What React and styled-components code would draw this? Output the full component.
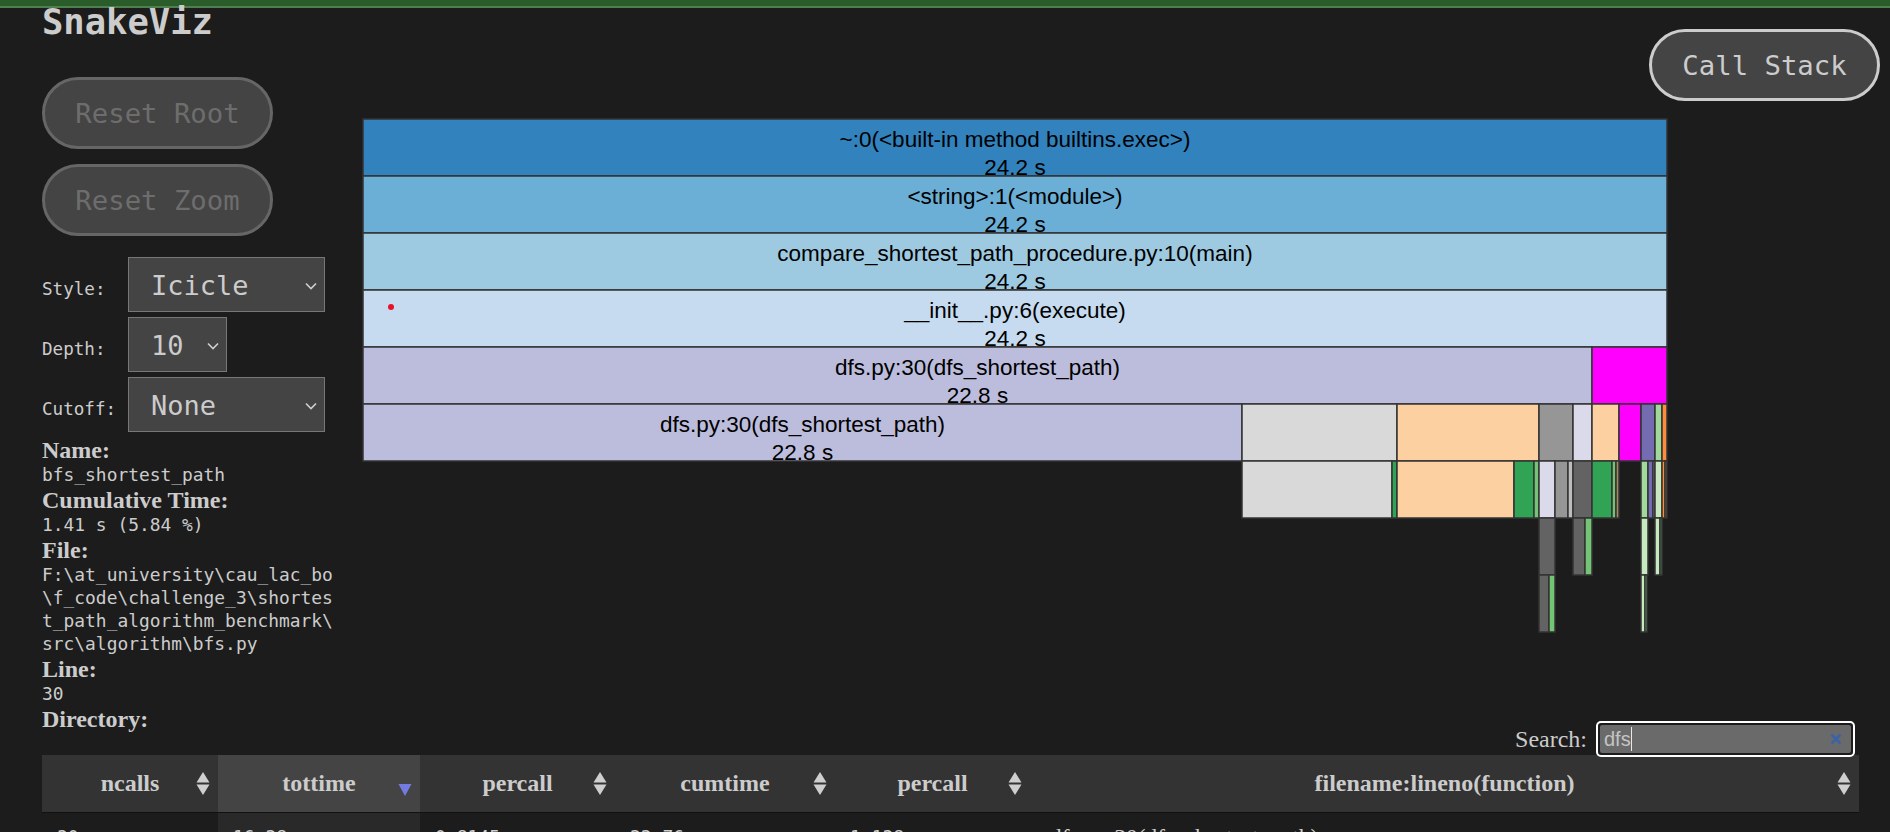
import styled, { createGlobalStyle } from "styled-components"

const MONO = '"DejaVu Sans Mono", "Liberation Mono", monospace'
const SERIF = '"Liberation Serif", "Times New Roman", serif'

const ROW = 57
const CHART_W = 1304
const CHART_X = 363

// x0, x1 in page pixels, one list per depth of the icicle
const LEVELS = [
    [[363, 1667, "#3182bd", "~:0(<built-in method builtins.exec>)", "24.2 s"]],
    [[363, 1667, "#6baed6", "<string>:1(<module>)", "24.2 s"]],
    [[363, 1667, "#9ecae1", "compare_shortest_path_procedure.py:10(main)", "24.2 s"]],
    [[363, 1667, "#c6dbef", "__init__.py:6(execute)", "24.2 s"]],
    [
        [363, 1592, "#bcbddc", "dfs.py:30(dfs_shortest_path)", "22.8 s"],
        [1592, 1667, "#ff00ff"],
    ],
    [
        [363, 1242, "#bcbddc", "dfs.py:30(dfs_shortest_path)", "22.8 s"],
        [1242, 1397, "#d9d9d9"],
        [1397, 1539, "#fdd0a2"],
        [1539, 1573, "#969696"],
        [1573, 1592, "#dadaeb"],
        [1592, 1619, "#fdd0a2"],
        [1619, 1641, "#ff00ff"],
        [1641, 1655, "#756bb1"],
        [1655, 1662, "#a1d99b"],
        [1662, 1667, "#fd8d3c"],
    ],
    [
        [1242, 1392, "#d9d9d9"],
        [1392, 1397, "#31a354"],
        [1397, 1514, "#fdd0a2"],
        [1514, 1534, "#31a354"],
        [1534, 1539, "#74c476"],
        [1539, 1555, "#dadaeb"],
        [1555, 1568, "#969696"],
        [1568, 1573, "#bdbdbd"],
        [1573, 1592, "#636363"],
        [1592, 1612, "#31a354"],
        [1612, 1616, "#74c476"],
        [1616, 1619, "#a68a64"],
        [1641, 1648, "#a1d99b"],
        [1648, 1653, "#756bb1"],
        [1653, 1655, "#9e9ac8"],
        [1655, 1662, "#c7e9c0"],
        [1662, 1665, "#fd8d3c"],
        [1665, 1667, "#8c5a30"],
    ],
    [
        [1539, 1555, "#636363"],
        [1573, 1585, "#636363"],
        [1585, 1592, "#74c476"],
        [1641, 1648, "#c7e9c0"],
        [1655, 1660, "#c7e9c0"],
        [1660, 1662, "#4f8f5a"],
    ],
    [
        [1539, 1549, "#636363"],
        [1549, 1555, "#74c476"],
        [1641, 1645, "#c7e9c0"],
        [1645, 1647, "#74c476"],
    ],
]

const COLUMNS = [
    { title: "ncalls", value: "30" },
    { title: "tottime", value: "16.28", sorted: true },
    { title: "percall", value: "0.8145" },
    { title: "cumtime", value: "22.76" },
    { title: "percall", value: "1.138" },
    { title: "filename:lineno(function)", value: "dfs.py:30(dfs_shortest_path)", wide: true },
]

const FILE_PATH = "F:\\at_university\\cau_lac_bo\n\\f_code\\challenge_3\\shortes\nt_path_algorithm_benchmark\\\nsrc\\algorithm\\bfs.py"

function Icicle() {
    return (
        <ChartSvg width={CHART_W + 2} height={ROW * LEVELS.length + 2} viewBox={`${CHART_X - 1} 118 ${CHART_W + 2} ${ROW * LEVELS.length + 2}`}>
            {LEVELS.map((level, depth) =>
                level.map(([x0, x1, fill, name, time]) => {
                    const y = 119 + depth * ROW
                    return (
                        <g key={x0}>
                            <rect x={x0} y={y} width={x1 - x0} height={ROW} fill={fill} stroke="#333" strokeWidth="1.5" />
                            {name && (
                                <ChartLabel x={(x0 + x1) / 2} y={y + 28}>
                                    {name}
                                </ChartLabel>
                            )}
                            {time && (
                                <ChartLabel x={(x0 + x1) / 2} y={y + 56}>
                                    {time}
                                </ChartLabel>
                            )}
                        </g>
                    )
                })
            )}
            <circle cx="391" cy="307" r="3" fill="#e8102a" />
        </ChartSvg>
    )
}

function SortArrows() {
    return (
        <svg width="14" height="24" viewBox="0 0 14 24">
            <path d="M7 0 L13.5 10.5 L0.5 10.5 Z" fill="#cfcfcf" />
            <path d="M7 23 L13.5 12.5 L0.5 12.5 Z" fill="#cfcfcf" />
        </svg>
    )
}

function SortedArrow() {
    return (
        <svg width="14" height="12" viewBox="0 0 14 12">
            <path d="M7 12 L13.5 0 L0.5 0 Z" fill="#747be0" />
        </svg>
    )
}

function Chevron() {
    return (
        <svg width="12" height="8" viewBox="0 0 12 8">
            <path d="M1 1.5 L6 6.5 L11 1.5" stroke="#cfcfcf" strokeWidth="1.6" fill="none" />
        </svg>
    )
}

export default function App() {
    return (
        <Page>
            <GlobalStyle />
            <TopBar />
            <Upper>
                <Sidebar>
                    <Title>SnakeViz</Title>
                    <PillButton disabled>Reset Root</PillButton>
                    <PillButton disabled>Reset Zoom</PillButton>
                    <Controls>
                        <ControlRow>
                            <ControlLabel>Style:</ControlLabel>
                            <SelectBox $width={197}>
                                <span>Icicle</span>
                                <Chevron />
                            </SelectBox>
                        </ControlRow>
                        <ControlRow>
                            <ControlLabel>Depth:</ControlLabel>
                            <SelectBox $width={99}>
                                <span>10</span>
                                <Chevron />
                            </SelectBox>
                        </ControlRow>
                        <ControlRow>
                            <ControlLabel>Cutoff:</ControlLabel>
                            <SelectBox $width={197}>
                                <span>None</span>
                                <Chevron />
                            </SelectBox>
                        </ControlRow>
                    </Controls>
                    <Info>
                        <InfoTitle>Name:</InfoTitle>
                        <InfoValue>bfs_shortest_path</InfoValue>
                        <InfoTitle>Cumulative Time:</InfoTitle>
                        <InfoValue>1.41 s (5.84 %)</InfoValue>
                        <InfoTitle>File:</InfoTitle>
                        <InfoValue>{FILE_PATH}</InfoValue>
                        <InfoTitle>Line:</InfoTitle>
                        <InfoValue>30</InfoValue>
                        <InfoTitle>Directory:</InfoTitle>
                    </Info>
                </Sidebar>
                <ChartArea>
                    <Icicle />
                </ChartArea>
                <StackColumn>
                    <PillButton $bright>Call Stack</PillButton>
                </StackColumn>
            </Upper>
            <SearchRow>
                <SearchLabel>Search:</SearchLabel>
                <SearchBox>
                    <SearchInner>
                        <SearchText>dfs</SearchText>
                        <ClearIcon viewBox="0 0 12 12">
                            <path d="M1.5 1.5 L10.5 10.5 M10.5 1.5 L1.5 10.5" stroke="#3a62a8" strokeWidth="2.6" fill="none" />
                        </ClearIcon>
                    </SearchInner>
                </SearchBox>
            </SearchRow>
            <StatsTable>
                {COLUMNS.map((col, i) => (
                    <HeadCell key={i} $sorted={col.sorted}>
                        <span />
                        <HeadTitle>{col.title}</HeadTitle>
                        <ArrowSlot $sorted={col.sorted}>{col.sorted ? <SortedArrow /> : <SortArrows />}</ArrowSlot>
                    </HeadCell>
                ))}
                {COLUMNS.map((col, i) => (
                    <BodyCell key={i} $sorted={col.sorted} $wide={col.wide}>
                        {col.value}
                    </BodyCell>
                ))}
            </StatsTable>
        </Page>
    )
}

const GlobalStyle = createGlobalStyle`
    html, body {
        margin: 0;
        padding: 0;
        background: #1c1c1c;
        overflow: hidden;
    }
`

const Page = styled.div`
    height: 832px;
    overflow: hidden;
    background: #1c1c1c;
    color: #ccc;
    font-family: ${SERIF};
`

const TopBar = styled.div`
    height: 6px;
    background: #2a5d2a;
    border-bottom: 2px solid #4f7f4f;
`

const Upper = styled.div`
    display: flex;
    height: 713px;
`

const Sidebar = styled.div`
    width: 291px;
    margin-left: 42px;
    flex-shrink: 0;
`

const Title = styled.div`
    font-family: ${MONO};
    font-weight: bold;
    font-size: 35.5px;
    line-height: 28px;
    height: 30px;
    margin-bottom: 39px;
    color: #ccc;
`

const PillButton = styled.button`
    display: block;
    width: 231px;
    height: 72px;
    padding: 0;
    margin-bottom: 15px;
    border-radius: 36px;
    border: 3px solid ${(p) => (p.$bright ? "#ccc" : "#666")};
    background: #444;
    color: ${(p) => (p.$bright ? "#ccc" : "#6d6d6d")};
    font-family: ${MONO};
    font-size: 27.3px;
`

const Controls = styled.div`
    display: flex;
    flex-direction: column;
    gap: 5px;
    margin-top: 21px;
`

const ControlRow = styled.div`
    display: flex;
    align-items: flex-end;
`

const ControlLabel = styled.label`
    width: 86px;
    font-family: ${MONO};
    font-size: 17.6px;
    padding-bottom: 13px;
`

const SelectBox = styled.div`
    display: flex;
    align-items: center;
    justify-content: space-between;
    box-sizing: border-box;
    width: ${(p) => p.$width}px;
    height: 55px;
    padding: 2px 7px 0 22px;
    background: #444;
    border: 1px solid #777;
    font-family: ${MONO};
    font-size: 27px;
    color: #ccc;
`

const Info = styled.div`
    width: 291px;
    margin-top: 6px;
`

const InfoTitle = styled.div`
    font-family: ${SERIF};
    font-weight: bold;
    font-size: 24px;
    line-height: 25px;
    color: #ccc;
`

const InfoValue = styled.div`
    font-family: ${MONO};
    font-size: 17.9px;
    line-height: 23px;
    white-space: pre-line;
    margin-bottom: 2px;
    color: #ccc;
`

const ChartArea = styled.div`
    width: 1304px;
    margin-left: 30px;
    padding-top: 110px;
    flex-shrink: 0;
`

const ChartSvg = styled.svg`
    display: block;
    margin-left: -1px;
`

const ChartLabel = styled.text`
    font-family: "Liberation Sans", Arial, sans-serif;
    font-size: 22.5px;
    fill: #000;
    text-anchor: middle;
`

const StackColumn = styled.div`
    margin-left: -18px;
    padding-top: 21px;
`

const SearchRow = styled.div`
    display: flex;
    justify-content: flex-end;
    align-items: center;
    margin-right: 35px;
    gap: 9px;
    height: 36px;
    position: relative;
    z-index: 1;
`

const SearchLabel = styled.label`
    font-size: 24px;
    color: #ccc;
`

const SearchBox = styled.div`
    box-sizing: border-box;
    width: 259px;
    height: 36px;
    padding: 2px;
    border: 2px solid #fff;
    border-radius: 5px;
    background: #1c1c1c;
`

const SearchInner = styled.div`
    display: flex;
    align-items: center;
    justify-content: space-between;
    height: 100%;
    padding: 0 9px 0 4px;
    background: #6a6a6a;
    border-radius: 2px;
`

const SearchText = styled.span`
    font-family: "Liberation Sans", Arial, sans-serif;
    font-size: 20px;
    line-height: 24px;
    color: #c4c4c4;
    border-right: 1px solid #e8e8e8;
`

const ClearIcon = styled.svg`
    width: 12px;
    height: 12px;
`

const StatsTable = styled.div`
    display: grid;
    grid-template-columns: 176px 202px 195px 220px 195px 829px;
    margin: -2px 0 0 42px;
`

const HeadCell = styled.div`
    display: grid;
    grid-template-columns: 30px 1fr 30px;
    align-items: center;
    box-sizing: border-box;
    height: 58px;
    background: ${(p) => (p.$sorted ? "#444" : "#333")};
    border-bottom: 1px solid #111;
`

const HeadTitle = styled.div`
    font-weight: bold;
    font-size: 24px;
    text-align: center;
    color: #ccc;
`

const ArrowSlot = styled.div`
    display: flex;
    justify-content: center;
    align-self: ${(p) => (p.$sorted ? "end" : "center")};
    padding-bottom: ${(p) => (p.$sorted ? "16px" : "0")};
`

const BodyCell = styled.div`
    height: 40px;
    padding: 14px 0 0 ${(p) => (p.$wide ? "20px" : "15px")};
    font-family: ${(p) => (p.$wide ? SERIF : MONO)};
    font-size: ${(p) => (p.$wide ? "23.4px" : "18px")};
    line-height: 20px;
    background: ${(p) => (p.$sorted ? "#292929" : "transparent")};
    color: #ccc;
`
